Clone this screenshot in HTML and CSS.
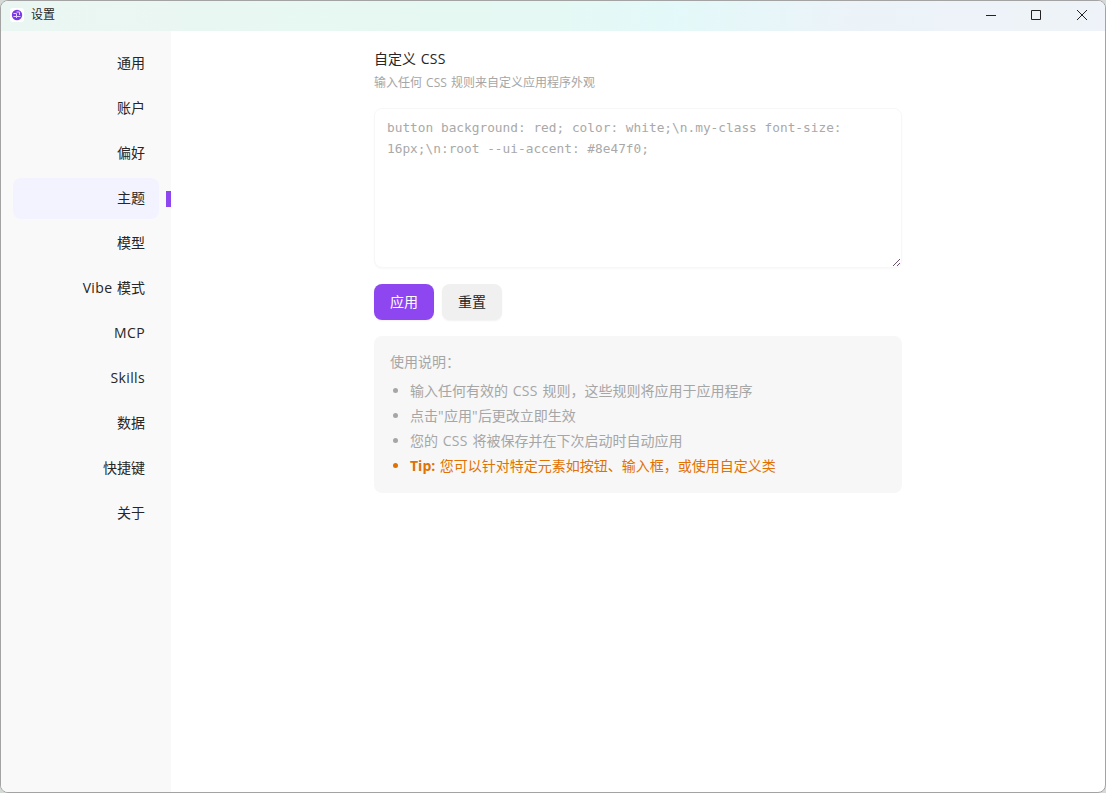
FILE: index.html
```
<!DOCTYPE html>
<html lang="zh-CN">
<head>
    <meta charset="UTF-8">
    <meta name="viewport" content="width=device-width, initial-scale=1.0">
    <title>设置</title>
    <link rel="stylesheet" href="styles.css">
</head>
<body>
    <div class="window">
        <header class="titlebar">
            <svg class="app-icon" width="14" height="14" viewBox="0 0 14 14">
                <rect width="14" height="14" rx="3" fill="#fff"/>
                <circle cx="7" cy="7" r="5.2" fill="#7a3ae6"/>
                <path d="M3.500 5.500h3v3h-3M6.500 4h3v3M6.500 10V8.500h4" fill="none" stroke="#e3d2ff" stroke-width="1"/>
            </svg>
            <span class="titlebar-text">设置</span>
            <div class="window-controls">
                <svg width="12" height="12" viewBox="0 0 12 12"><path d="M1 6.500h10"/></svg>
                <svg width="12" height="12" viewBox="0 0 12 12"><path d="M1.500 1.500h9v9h-9z"/></svg>
                <svg class="close" width="12" height="12" viewBox="0 0 12 12"><path d="M1 1l10 10M11 1L1 11"/></svg>
            </div>
        </header>

        <div class="layout">
            <nav class="sidebar">
                <a class="nav-item">通用</a>
                <a class="nav-item">账户</a>
                <a class="nav-item">偏好</a>
                <a class="nav-item active">主题</a>
                <a class="nav-item">模型</a>
                <a class="nav-item"><span class="latin">Vibe</span> 模式</a>
                <a class="nav-item"><span class="latin">MCP</span></a>
                <a class="nav-item"><span class="latin">Skills</span></a>
                <a class="nav-item">数据</a>
                <a class="nav-item">快捷键</a>
                <a class="nav-item">关于</a>
            </nav>

            <main class="content">
                <h1 class="title">自定义 <span class="latin">CSS</span></h1>
                <p class="subtitle">输入任何 CSS 规则来自定义应用程序外观</p>
                <div class="editor-wrap">
                    <textarea class="editor" spellcheck="false" placeholder="button background: red; color: white;\n.my-class font-size: 16px;\n:root --ui-accent: #8e47f0;"></textarea>
                    <svg class="grip" width="9" height="9" viewBox="0 0 9 9"><path d="M1 8l7-7M5 8l3-3"/></svg>
                </div>
                <div class="buttons">
                    <button type="button" class="btn btn-primary">应用</button>
                    <button type="button" class="btn">重置</button>
                </div>
                <section class="help">
                    <p class="help-title">使用说明：</p>
                    <ul class="help-list">
                        <li>输入任何有效的 <span class="latin">CSS</span> 规则，这些规则将应用于应用程序</li>
                        <li>点击<span class="latin">"</span>应用<span class="latin">"</span>后更改立即生效</li>
                        <li>您的 <span class="latin">CSS</span> 将被保存并在下次启动时自动应用</li>
                        <li class="tip"><strong>Tip:</strong> 您可以针对特定元素如按钮、输入框，或使用自定义类</li>
                    </ul>
                </section>
            </main>
        </div>
    </div>
</body>
</html>
```

FILE: styles.css
```
* {
    box-sizing: border-box;
}
body {
    margin: 0;
    height: 100vh;
    overflow: hidden;
    background: #d5dad7;
    font-family: "Open Sans", "Noto Sans CJK SC", sans-serif;
    font-size: 14px;
    word-spacing: 1px;
    color: #262626;
}
.latin {
    letter-spacing: 0.35px;
}
.window {
    height: 100vh;
    display: flex;
    flex-direction: column;
    border: 1px solid #a3a3a3;
    border-radius: 8px;
    overflow: hidden;
    background: #fff;
}
.titlebar {
    height: 30px;
    flex: none;
    display: flex;
    align-items: center;
    padding: 0 17px 2px 9px;
    background: linear-gradient(95deg, #ebf6f2 0%, #e6f8f2 40%, #e5f8f4 50%, #e3f9f9 60%, #ecf3f8 78%, #eff3f9 100%);
}
.titlebar-text {
    margin-left: 7px;
    font-size: 12px;
    line-height: 16px;
    padding-bottom: 1px;
}
.window-controls {
    display: flex;
    gap: 33px;
    margin-left: auto;
}
.window-controls svg {
    fill: none;
    stroke: #222;
    stroke-width: 1;
}
.window-controls .close {
    margin-left: 1px;
}
.layout {
    flex: 1;
    display: flex;
}
.sidebar {
    width: 170px;
    padding: 12px;
    display: flex;
    flex-direction: column;
    gap: 4px;
    background: #f9f9f9;
}
.nav-item {
    position: relative;
    height: 41px;
    padding-right: 14px;
    border-radius: 8px;
    line-height: 39px;
    text-align: right;
}
.nav-item.active {
    background: #f3f3ff;
}
.nav-item.active::after {
    content: "";
    position: absolute;
    right: -12px;
    top: 13px;
    width: 5px;
    height: 16px;
    background: #8e47f0;
}
.content {
    width: 528px;
    margin: 0 auto;
    padding-top: 18px;
}
.title {
    margin: 0;
    font-size: 14px;
    font-weight: 400;
    line-height: 20px;
}
.subtitle {
    margin: 4px 0 16px;
    font-size: 12px;
    line-height: 19px;
    color: #a6a6a6;
}
.editor-wrap {
    position: relative;
    height: 160px;
}
.editor {
    display: block;
    width: 100%;
    height: 100%;
    padding: 8px 12px;
    border: 1px solid #f7f7f7;
    border-radius: 8px;
    box-shadow: 0 1px 2px rgba(0, 0, 0, 0.03);
    outline: none;
    resize: none;
    font-family: "DejaVu Sans Mono", monospace;
    font-size: 12.8px;
    line-height: 21px;
}
.editor::placeholder {
    color: #a9a9a9;
}
.grip {
    position: absolute;
    right: 1px;
    bottom: 1px;
    fill: none;
    stroke: #5c3a5c;
    stroke-width: 0.9;
}
.buttons {
    display: flex;
    gap: 8px;
    margin: 16px 0;
}
.btn {
    width: 60px;
    height: 36px;
    padding: 0 0 2px;
    border: none;
    border-radius: 8px;
    background: #f0f0f0;
    box-shadow: 0 1px 2px rgba(0, 0, 0, 0.06);
    font-family: inherit;
    font-size: 14px;
    color: #262626;
}
.btn-primary {
    background: #8e47f0;
    color: #fff;
}
.help {
    height: 157px;
    padding: 16px;
    border-radius: 8px;
    background: #f7f7f7;
    color: #a6a6a6;
}
.help-title {
    margin: 0 0 8px;
    line-height: 20px;
}
.help-list {
    margin: 0;
    padding-left: 20px;
}
.help-list li {
    height: 21px;
    margin-bottom: 4px;
    line-height: 21px;
    white-space: nowrap;
}
.help-list .tip {
    color: #e17100;
}
```
